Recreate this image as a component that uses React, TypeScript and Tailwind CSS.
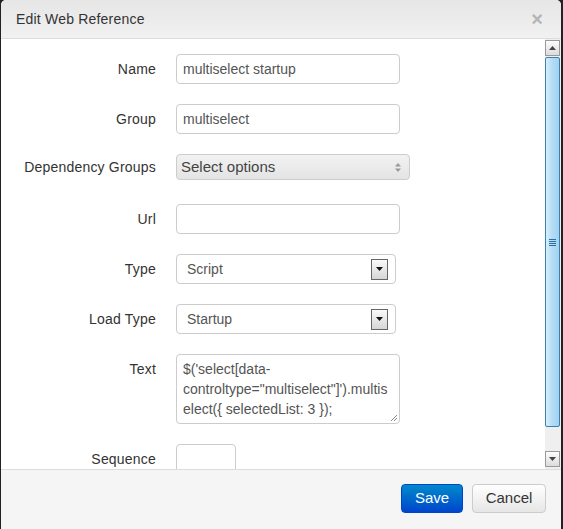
import React from "react";

function Row({ label, children, top = false }: { label: string; children: React.ReactNode; top?: boolean }) {
  return (
    <div className={`flex ${top ? "items-start" : "items-center"} mb-5`}>
      <label className={`w-[155px] shrink-0 text-right text-[14px] tracking-[0.2px] text-[#333] ${top ? "pt-[5px] leading-[20px]" : ""}`}>
        {label}
      </label>
      <div className="ml-5">{children}</div>
    </div>
  );
}

function SelectBox({ value }: { value: string }) {
  return (
    <div className="flex h-[30px] w-[220px] items-center justify-between rounded-[4px] border border-[#ccc] bg-white pl-[10px] pr-[7px] text-[14px] text-[#555]">
      <span>{value}</span>
      <span className="flex h-[21px] w-[17px] items-center justify-center border border-[#666] bg-gradient-to-b from-[#fafafa] to-[#d6d6d6]">
        <svg width="7" height="4" viewBox="0 0 7 4">
          <path d="M0 0h7L3.5 4z" fill="#111" />
        </svg>
      </span>
    </div>
  );
}

export default function App() {
  const input = "h-[30px] w-[224px] rounded-[4px] border border-[#ccc] bg-white px-[6px] text-[14px] text-[#555] flex items-center";
  return (
    <div className="h-[529px] w-[563px] overflow-hidden bg-[#222] font-['Liberation_Sans',Arial,sans-serif]">
      <div className="ml-[1px] flex h-[529px] w-[560px] flex-col overflow-hidden rounded-t-[5px] bg-white">
        <div className="flex h-[39px] shrink-0 items-center justify-between border-b border-[#ddd] bg-gradient-to-b from-[#e6e6e6] to-[#f1f1f1] pl-[15px] pr-[18px]">
          <span className="text-[14px] tracking-[0.2px] text-[#333]">Edit Web Reference</span>
          <span className="text-[20px] font-bold leading-none text-[#b5b5b5]">×</span>
        </div>

        <div className="flex h-[430px] shrink-0">
          <div className="flex-1 overflow-hidden pt-[15px]">
            <Row label="Name">
              <div className={input}>multiselect startup</div>
            </Row>
            <Row label="Group">
              <div className={input}>multiselect</div>
            </Row>
            <div className="mb-6 flex items-center">
              <label className="w-[155px] shrink-0 text-right text-[14px] tracking-[0.2px] text-[#333]">Dependency Groups</label>
              <div className="ml-5 flex h-[26px] w-[234px] items-center justify-between rounded-[4px] border border-[#ccc] bg-gradient-to-b from-[#f2f2f2] to-[#e4e4e4] pl-[4px] pr-[8px] text-[15px] text-[#444]">
                <span>Select options</span>
                <svg width="6" height="9" viewBox="0 0 6 9">
                  <path d="M0 3.5L3 0l3 3.5zM0 5.5h6L3 9z" fill="#999" />
                </svg>
              </div>
            </div>
            <Row label="Url">
              <div className={input}></div>
            </Row>
            <Row label="Type">
              <SelectBox value="Script" />
            </Row>
            <Row label="Load Type">
              <SelectBox value="Startup" />
            </Row>
            <Row label="Text" top>
              <div className="relative h-[70px] w-[224px] rounded-[4px] border border-[#ccc] bg-white px-[6px] pt-[4px] text-[14px] leading-[20px] text-[#555]">
                <div>$('select[data-</div>
                <div>controltype="multiselect"]').multis</div>
                <div>elect({"{"} selectedList: 3 {"}"});</div>
                <svg className="absolute bottom-[1px] right-[1px]" width="8" height="8" viewBox="0 0 8 8">
                  <path d="M7 1L1 7M7 4L4 7" stroke="#888" strokeWidth="1" />
                </svg>
              </div>
            </Row>
            <Row label="Sequence">
              <div className="h-[30px] w-[60px] rounded-[4px] border border-[#ccc] bg-white"></div>
            </Row>
          </div>

          <div className="flex w-[16px] shrink-0 flex-col bg-[#efefef] py-[1px] pr-[1px]">
            <div className="flex h-[16px] items-center justify-center border border-[#9a9a9a] bg-gradient-to-b from-[#fdfdfd] to-[#dcdcdc]">
              <svg width="7" height="4" viewBox="0 0 7 4">
                <path d="M0 4h7L3.5 0z" fill="#444" />
              </svg>
            </div>
            <div className="mt-[1px] flex h-[370px] items-center justify-center rounded-[2px] border border-[#3c7fb1] bg-gradient-to-r from-[#d9effb] via-[#b2dcf5] to-[#a2d2ef]">
              <svg width="7" height="7" viewBox="0 0 7 7">
                <path d="M0 0.5h7M0 2.5h7M0 4.5h7M0 6.5h7" stroke="#2d6e9c" strokeWidth="1" />
              </svg>
            </div>
            <div className="flex-1"></div>
            <div className="mb-[1px] flex h-[16px] items-center justify-center border border-[#9a9a9a] bg-gradient-to-b from-[#fdfdfd] to-[#dcdcdc]">
              <svg width="7" height="4" viewBox="0 0 7 4">
                <path d="M0 0h7L3.5 4z" fill="#444" />
              </svg>
            </div>
          </div>
        </div>

        <div className="flex flex-1 items-start justify-end gap-[9px] border-t border-[#ddd] bg-[#f5f5f5] pr-[15px] pt-[14px]">
          <button className="h-[29px] w-[62px] rounded-[4px] border border-[#04c] bg-gradient-to-b from-[#08c] to-[#04c] text-[15px] text-white">
            Save
          </button>
          <button className="h-[29px] w-[74px] rounded-[4px] border border-[#ccc] bg-gradient-to-b from-white to-[#e6e6e6] text-[15px] text-[#333]">
            Cancel
          </button>
        </div>
      </div>
    </div>
  );
}
